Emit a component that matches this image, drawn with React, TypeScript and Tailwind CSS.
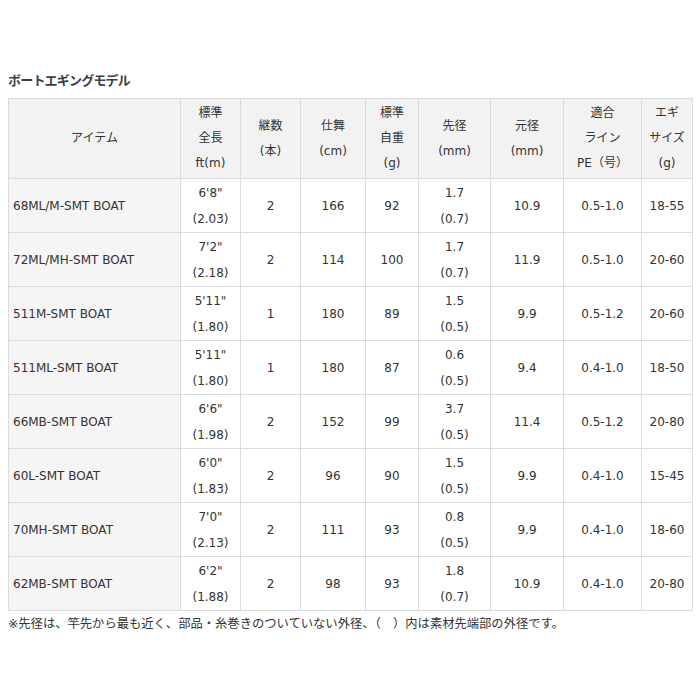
import React from "react";

const rows = [
  ["68ML/M-SMT BOAT", "6'8\"", "(2.03)", "2", "166", "92", "1.7", "(0.7)", "10.9", "0.5-1.0", "18-55"],
  ["72ML/MH-SMT BOAT", "7'2\"", "(2.18)", "2", "114", "100", "1.7", "(0.7)", "11.9", "0.5-1.0", "20-60"],
  ["511M-SMT BOAT", "5'11\"", "(1.80)", "1", "180", "89", "1.5", "(0.5)", "9.9", "0.5-1.2", "20-60"],
  ["511ML-SMT BOAT", "5'11\"", "(1.80)", "1", "180", "87", "0.6", "(0.5)", "9.4", "0.4-1.0", "18-50"],
  ["66MB-SMT BOAT", "6'6\"", "(1.98)", "2", "152", "99", "3.7", "(0.5)", "11.4", "0.5-1.2", "20-80"],
  ["60L-SMT BOAT", "6'0\"", "(1.83)", "2", "96", "90", "1.5", "(0.5)", "9.9", "0.4-1.0", "15-45"],
  ["70MH-SMT BOAT", "7'0\"", "(2.13)", "2", "111", "93", "0.8", "(0.5)", "9.9", "0.4-1.0", "18-60"],
  ["62MB-SMT BOAT", "6'2\"", "(1.88)", "2", "98", "93", "1.8", "(0.7)", "10.9", "0.4-1.0", "20-80"],
];

const font = { fontFamily: "'DejaVu Sans', 'Noto Sans CJK JP', sans-serif" };

export default function App() {
  const th = "border border-[#dcdcdc] bg-[#f2f2f2] text-center font-normal leading-[25px] py-[2px] px-0";
  const td = "border border-[#dcdcdc] text-center leading-[26px] py-0 px-0";
  return (
    <div className="w-[700px] h-[700px] bg-white text-[#333] text-[12px]" style={font}>
      <div className="pt-[70px] pl-[8px]">
        <div className="text-[13px] font-bold text-[#3a3f4a] leading-[20px] tracking-[-0.8px]" style={{ fontFamily: "'Noto Sans CJK JP', sans-serif" }}>
          ボートエギングモデル
        </div>
      </div>
      <div className="px-[8px] mt-[8px]">
        <table className="border-collapse table-fixed w-[684px]">
          <colgroup>
            <col className="w-[172px]" />
            <col className="w-[60px]" />
            <col className="w-[60px]" />
            <col className="w-[65px]" />
            <col className="w-[53px]" />
            <col className="w-[72px]" />
            <col className="w-[73px]" />
            <col className="w-[78px]" />
            <col className="w-[51px]" />
          </colgroup>
          <thead>
            <tr className="h-[79px]">
              <th className={th}>アイテム</th>
              <th className={th}>標準<br />全長<br />ft(m)</th>
              <th className={th}>継数<br />(本)</th>
              <th className={th}>仕舞<br />(cm)</th>
              <th className={th}>標準<br />自重<br />(g)</th>
              <th className={th}>先径<br />(mm)</th>
              <th className={th}>元径<br />(mm)</th>
              <th className={th}>適合<br />ライン<br />PE（号）</th>
              <th className={th}>エギ<br />サイズ<br />(g)</th>
            </tr>
          </thead>
          <tbody>
            {rows.map((r) => (
              <tr key={r[0]} className="h-[54px]">
                <td className={td + " text-left pl-[4px] bg-[#f5f5f5]"}>{r[0]}</td>
                <td className={td}>{r[1]}<br />{r[2]}</td>
                <td className={td}>{r[3]}</td>
                <td className={td}>{r[4]}</td>
                <td className={td}>{r[5]}</td>
                <td className={td}>{r[6]}<br />{r[7]}</td>
                <td className={td}>{r[8]}</td>
                <td className={td}>{r[9]}</td>
                <td className={td}>{r[10]}</td>
              </tr>
            ))}
          </tbody>
        </table>
        <div className="mt-[3px] text-[12.3px] leading-[20px] text-[#333]">
          ※先径は、竿先から最も近く、部品・糸巻きのついていない外径、（　）内は素材先端部の外径です。
        </div>
      </div>
    </div>
  );
}
